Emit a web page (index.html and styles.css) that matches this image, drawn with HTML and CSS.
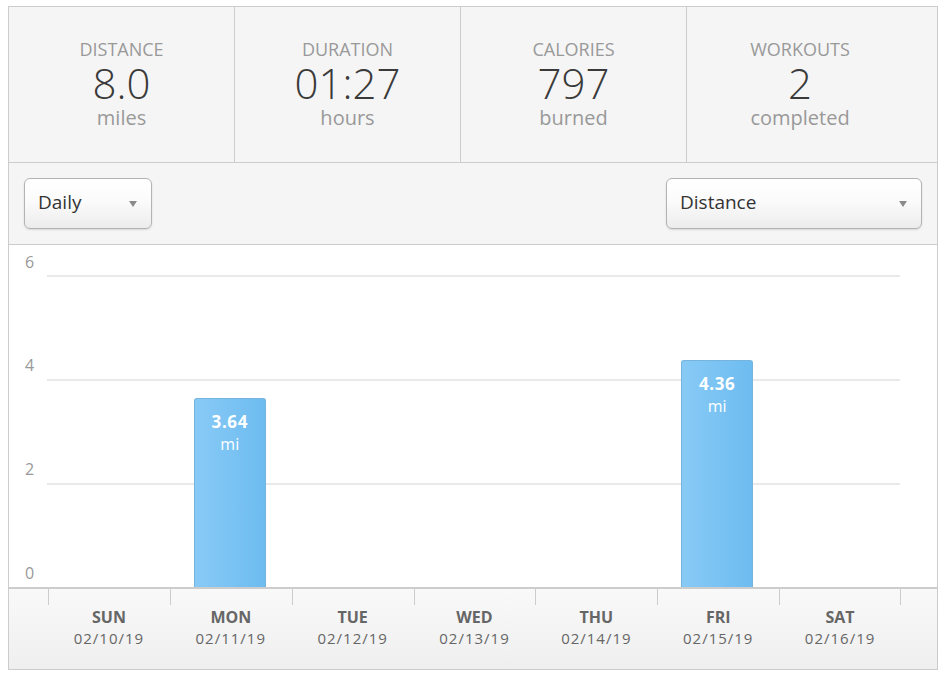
FILE: index.html
```html
<!DOCTYPE html>
<html>
<head>
<meta charset="utf-8">
<title>Weekly summary</title>
<link rel="stylesheet" href="styles.css">
</head>
<body>
<div class="panel">
  <div class="stats">
    <div class="stat">
      <div class="stat-label">DISTANCE</div>
      <div class="stat-value">8.0</div>
      <div class="stat-unit">miles</div>
    </div>
    <div class="stat">
      <div class="stat-label">DURATION</div>
      <div class="stat-value">01:27</div>
      <div class="stat-unit">hours</div>
    </div>
    <div class="stat">
      <div class="stat-label">CALORIES</div>
      <div class="stat-value">797</div>
      <div class="stat-unit">burned</div>
    </div>
    <div class="stat stat-last">
      <div class="stat-label">WORKOUTS</div>
      <div class="stat-value">2</div>
      <div class="stat-unit">completed</div>
    </div>
  </div>

  <div class="controls">
    <div class="select select-period"><span>Daily</span><span class="caret"></span></div>
    <div class="select select-metric"><span>Distance</span><span class="caret"></span></div>
  </div>

  <div class="chart">
    <div class="yaxis">
      <div class="ylabel ylabel-top">6</div>
      <div class="ylabel ylabel-row">4</div>
      <div class="ylabel ylabel-row">2</div>
      <div class="ylabel ylabel-row">0</div>
    </div>
    <div class="plot">
      <div class="gridline"></div>
      <div class="gridline"></div>
      <div class="gridline"></div>
      <div class="bars">
        <div class="bar-col"></div>
        <div class="bar-col"><div class="bar" style="height: 189px"><div class="bar-val">3.64</div><div class="bar-unit">mi</div></div></div>
        <div class="bar-col"></div>
        <div class="bar-col"></div>
        <div class="bar-col"></div>
        <div class="bar-col"><div class="bar" style="height: 227px"><div class="bar-val">4.36</div><div class="bar-unit">mi</div></div></div>
        <div class="bar-col"></div>
      </div>
    </div>
  </div>

  <div class="xaxis">
    <div class="xaxis-gutter"></div>
    <div class="xcol"><div class="xday">SUN</div><div class="xdate">02/10/19</div></div>
    <div class="xcol"><div class="xday">MON</div><div class="xdate">02/11/19</div></div>
    <div class="xcol"><div class="xday">TUE</div><div class="xdate">02/12/19</div></div>
    <div class="xcol"><div class="xday">WED</div><div class="xdate">02/13/19</div></div>
    <div class="xcol"><div class="xday">THU</div><div class="xdate">02/14/19</div></div>
    <div class="xcol"><div class="xday">FRI</div><div class="xdate">02/15/19</div></div>
    <div class="xcol xcol-last"><div class="xday">SAT</div><div class="xdate">02/16/19</div></div>
  </div>
</div>
</body>
</html>
```

FILE: styles.css
```css
* { box-sizing: border-box; }

html, body {
  background: #ffffff;
}

body {
  margin: 6px 0 0 8px;
  font-family: "Open Sans", "Liberation Sans", sans-serif;
  color: #333;
}

.panel {
  width: 930px;
  border: 1px solid #cccccc;
  background: #f5f5f5;
}

/* stats row */
.stats {
  display: flex;
  border-bottom: 1px solid #cccccc;
  height: 156px;
}

.stat {
  width: 226px;
  border-right: 1px solid #cccccc;
  text-align: center;
  padding-top: 31px;
}

.stat-last {
  border-right: none;
}

.stat-label {
  font-size: 18px;
  line-height: 22px;
  color: #999999;
}

.stat-value {
  font-size: 42px;
  line-height: 46px;
  font-weight: 300;
  color: #3a3a3a;
}

.stat-unit {
  font-size: 20px;
  line-height: 24px;
  color: #999999;
}

/* controls */
.controls {
  display: flex;
  justify-content: space-between;
  padding: 15px 15px;
  border-bottom: 1px solid #cccccc;
  height: 82px;
}

.select {
  height: 51px;
  border: 1px solid #b3b3b3;
  border-radius: 6px;
  background: linear-gradient(to bottom, #ffffff 0%, #fbfbfb 45%, #ececec 100%);
  box-shadow: 0 1px 2px rgba(0, 0, 0, 0.12);
  display: flex;
  align-items: center;
  justify-content: space-between;
  padding: 0 14px 3px 13px;
  font-size: 19px;
  color: #333;
}

.select-period { width: 128px; }
.select-metric { width: 256px; }

.caret {
  width: 0;
  height: 0;
  border-left: 4px solid transparent;
  border-right: 4px solid transparent;
  border-top: 6px solid #8a8a8a;
  margin-top: 3px;
}

/* chart */
.chart {
  display: flex;
  height: 342px;
  background: #ffffff;
}

.yaxis {
  width: 38px;
  padding-left: 16px;
}

.ylabel {
  font-size: 16px;
  color: #999999;
  display: flex;
  align-items: flex-end;
  line-height: 20px;
}

.ylabel-top {
  height: 30px;
  padding-bottom: 3px;
}

.ylabel-row {
  height: 104px;
  padding-bottom: 4px;
}

.plot {
  width: 853px;
  position: relative;
  padding-top: 30px;
}

.gridline {
  height: 104px;
  border-top: 2px solid #e9e9e9;
}

.bars {
  position: absolute;
  inset: 0;
  display: flex;
  align-items: flex-end;
}

.bar-col {
  flex: 1;
  display: flex;
  justify-content: center;
  align-items: flex-end;
  height: 100%;
}

.bar {
  width: 72px;
  border: 1px solid #76b3dd;
  border-bottom: none;
  border-radius: 3px 3px 0 0;
  background: linear-gradient(to right, #88caf6 0%, #6dbcf0 100%);
  color: #ffffff;
  text-align: center;
  padding-top: 12px;
}

.bar-val {
  font-size: 17px;
  font-weight: 700;
  line-height: 22px;
  letter-spacing: 0.6px;
}

.bar-unit {
  font-size: 16px;
  line-height: 22px;
}

/* x axis */
.xaxis {
  display: flex;
  height: 82px;
  border-top: 2px solid #cccccc;
  background: linear-gradient(to bottom, #f9f9f9 0%, #efefef 100%);
}

.xaxis-gutter {
  width: 39px;
}

.xcol {
  width: 121.86px;
  text-align: center;
  padding-top: 18px;
  background: linear-gradient(#cccccc, #cccccc) left top / 1px 16px no-repeat;
}

.xcol-last {
  background:
    linear-gradient(#cccccc, #cccccc) left top / 1px 16px no-repeat,
    linear-gradient(#cccccc, #cccccc) right top / 1px 16px no-repeat;
}

.xday {
  font-size: 16px;
  font-weight: 700;
  line-height: 21px;
  color: #666666;
}

.xdate {
  font-size: 15px;
  line-height: 21px;
  color: #666666;
  letter-spacing: 1px;
}
```
